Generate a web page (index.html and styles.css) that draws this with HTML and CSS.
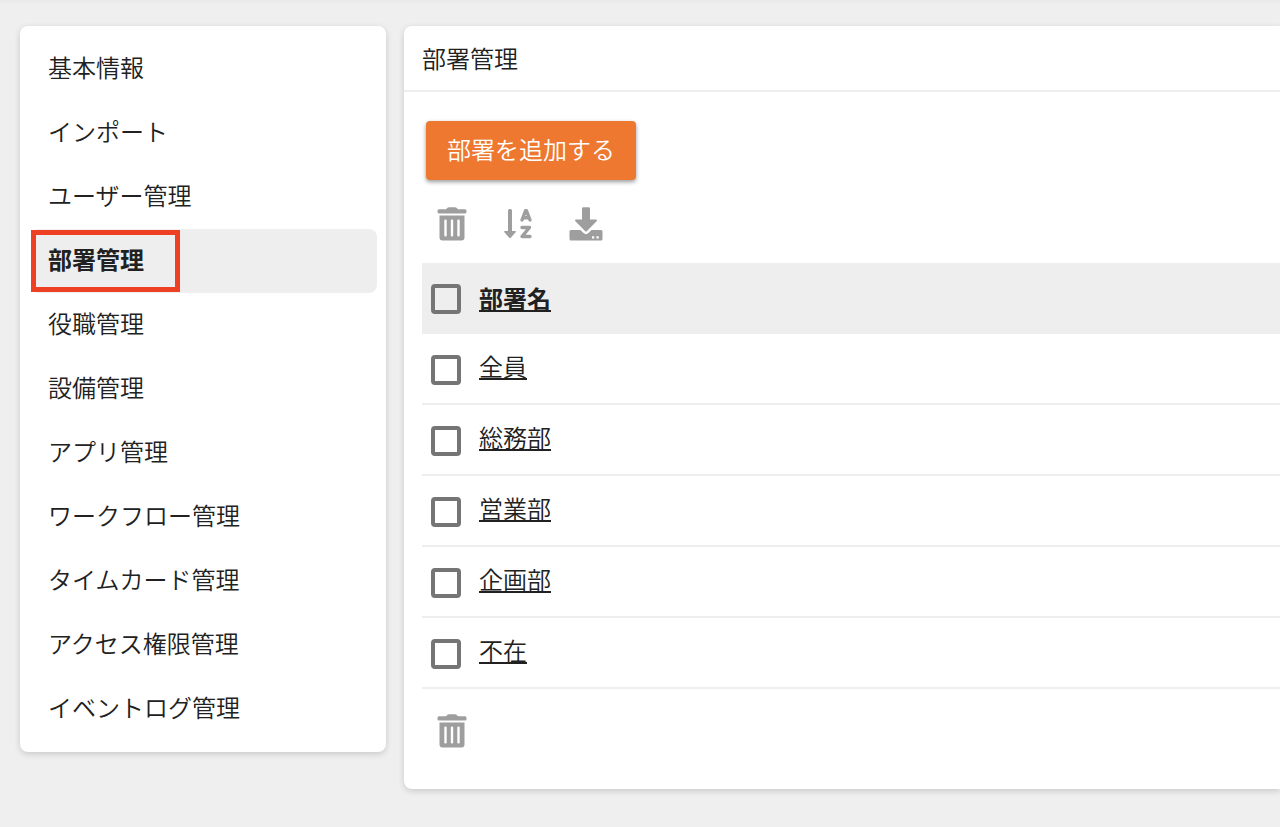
FILE: index.html
```html
<!DOCTYPE html>
<html lang="ja">
<head>
  <meta charset="UTF-8">
  <meta name="viewport" content="width=device-width, initial-scale=1.0">
  <title>部署管理</title>
  <link rel="stylesheet" href="styles.css">
</head>
<body>
  <!-- shared icon -->
  <svg class="icon-defs" aria-hidden="true">
    <symbol id="icon-trash" viewBox="0 0 30 34">
      <path fill-rule="evenodd" d="M1.500 2.300H9L10.500.800Q11 .300 12 .300H18Q19 .300 19.500.800L21 2.300H28Q29.500 2.300 29.500 3.800V5Q29.500 6.500 28 6.500H2Q.500 6.500.500 5V3.800Q.500 2.300 2 2.300ZM2.500 8.500H27.500V30.500Q27.500 33.500 24.500 33.500H5.500Q2.500 33.500 2.500 30.500ZM8.300 12.500Q7.300 12.500 7.300 13.500V28.500Q7.300 29.500 8.300 29.500H8.700Q9.700 29.500 9.700 28.500V13.500Q9.700 12.500 8.700 12.500ZM14.800 12.500Q13.800 12.500 13.800 13.500V28.500Q13.800 29.500 14.800 29.500H15.200Q16.200 29.500 16.200 28.500V13.500Q16.200 12.500 15.200 12.500ZM21.300 12.500Q20.300 12.500 20.300 13.500V28.500Q20.300 29.500 21.300 29.500H21.700Q22.700 29.500 22.700 28.500V13.500Q22.700 12.500 21.700 12.500Z"/>
    </symbol>
  </svg>

  <div class="container">
    <nav class="sidebar">
      <a href="#">基本情報</a>
      <a href="#">インポート</a>
      <a href="#">ユーザー管理</a>
      <a href="#" class="active">部署管理</a>
      <a href="#">役職管理</a>
      <a href="#">設備管理</a>
      <a href="#">アプリ管理</a>
      <a href="#">ワークフロー管理</a>
      <a href="#">タイムカード管理</a>
      <a href="#">アクセス権限管理</a>
      <a href="#">イベントログ管理</a>
    </nav>

    <main class="panel">
      <h1>部署管理</h1>
      <div class="panel-body">
        <button type="button" class="add-button">部署を追加する</button>

        <div class="toolbar">
          <button type="button" aria-label="削除"><svg width="30" height="34"><use href="#icon-trash"/></svg></button>
          <button type="button" aria-label="並べ替え">
            <svg width="30" height="34" viewBox="0 0 30 34">
              <path d="M5 3.500Q5 2 6.500 2H7.500Q9 2 9 3.500V24H12Q13.500 24.200 12.600 25.300L8 30.500Q7 31.500 6 30.500L1.400 25.300Q.500 24.200 2 24H5Z"/>
              <path fill="none" stroke="#9e9e9e" stroke-width="3.400" stroke-linejoin="round" stroke-linecap="round" d="M19 13L22.500 3.800H23.500L27 13M20.500 10.800H25.500M19 20.500H26.500L19 29.500H27"/>
            </svg>
          </button>
          <button type="button" aria-label="ダウンロード">
            <svg width="34" height="34" viewBox="0 0 34 34">
              <path d="M13 1.500Q13 .300 14.200.300H19.800Q21 .300 21 1.500V12.500H27Q28.800 12.700 27.600 14.200L18 24Q17 25 16 24L6.400 14.200Q5.200 12.700 7 12.500H13Z"/>
              <path fill-rule="evenodd" d="M2 23H11.500L14.500 26Q17 28.300 19.500 26L22.500 23H32Q33.500 23 33.500 24.500V32Q33.500 33.500 32 33.500H2Q.500 33.500.500 32V24.500Q.500 23 2 23ZM23 29.200V31.400H25.200V29.200ZM27.500 29.200V31.400H29.700V29.200Z"/>
            </svg>
          </button>
        </div>

        <table>
          <thead>
            <tr>
              <th class="check"><input type="checkbox" aria-label="すべて選択"></th>
              <th><a href="#">部署名</a></th>
            </tr>
          </thead>
          <tbody>
            <tr>
              <td class="check"><input type="checkbox" aria-label="全員"></td>
              <td><a href="#">全員</a></td>
            </tr>
            <tr>
              <td class="check"><input type="checkbox" aria-label="総務部"></td>
              <td><a href="#">総務部</a></td>
            </tr>
            <tr>
              <td class="check"><input type="checkbox" aria-label="営業部"></td>
              <td><a href="#">営業部</a></td>
            </tr>
            <tr>
              <td class="check"><input type="checkbox" aria-label="企画部"></td>
              <td><a href="#">企画部</a></td>
            </tr>
            <tr>
              <td class="check"><input type="checkbox" aria-label="不在"></td>
              <td><a href="#">不在</a></td>
            </tr>
          </tbody>
        </table>

        <div class="toolbar toolbar-bottom">
          <button type="button" aria-label="選択した部署を削除"><svg width="30" height="34"><use href="#icon-trash"/></svg></button>
        </div>
      </div>
    </main>
  </div>
</body>
</html>
```
FILE: styles.css
```css
*, *::after {
  margin: 0;
  padding: 0;
  box-sizing: border-box;
}
body {
  min-height: 100vh;
  font-family: "Noto Sans CJK JP", sans-serif;
  font-size: 24px;
  font-weight: 350;
  line-height: 32px;
  color: #212121;
  background-color: #efefef;
  box-shadow: inset 0 4px 4px -3px rgba(0, 0, 0, 0.04);
}
a {
  color: inherit;
}
.icon-defs {
  display: none;
}
.container {
  display: flex;
  align-items: flex-start;
  gap: 18px;
  padding: 26px 0 26px 20px;
}
.sidebar, .panel {
  background-color: #fff;
  box-shadow: 0 2px 6px rgba(0, 0, 0, 0.16);
}
.sidebar {
  flex: 0 0 366px;
  padding: 11px 9px 11px 11px;
  border-radius: 8px;
}
.sidebar a {
  display: block;
  padding: 14px 17px 18px;
  border-radius: 8px;
  text-decoration: none;
}
.sidebar .active {
  position: relative;
  font-weight: 700;
  background-color: #eee;
}
/* red frame round the current item */
.sidebar .active::after {
  content: "";
  position: absolute;
  top: 1px;
  left: 0;
  width: 149px;
  height: 62px;
  border: 5px solid #ee4023;
}
.panel {
  flex: 1;
  border-radius: 8px 0 0 8px;
}
h1 {
  padding: 16px 18px;
  font-size: 24px;
  font-weight: 350;
  border-bottom: 2px solid #eee;
}
.panel-body {
  padding: 29px 0 0 18px;
}
.add-button {
  display: block;
  height: 59px;
  margin-left: 4px;
  padding: 0 21px 4px;
  font: inherit;
  color: #fff;
  background-color: #ee7830;
  border: none;
  border-radius: 4px;
  box-shadow: 0 2px 4px rgba(0, 0, 0, 0.4);
}
.toolbar {
  display: flex;
  gap: 36px;
  padding: 26px 15px 21px;
}
.toolbar-bottom {
  padding: 24px 15px 40px;
}
.toolbar button {
  height: 36px;
  background: none;
  border: none;
}
.toolbar svg {
  display: block;
  margin: auto;
  fill: #9e9e9e;
}
table {
  width: 100%;
  border-collapse: collapse;
}
th, td {
  text-align: left;
  vertical-align: middle;
  border-bottom: 2px solid #eee;
}
th {
  height: 70px;
  font-weight: 700;
  background-color: #eee;
}
td {
  height: 71px;
  padding-bottom: 6px;
}
.check {
  width: 57px;
  padding: 2px 0 0 9px;
}
td a, th a {
  text-decoration-thickness: 2px;
  text-underline-offset: 2px;
}
input[type="checkbox"] {
  display: block;
  appearance: none;
  width: 30px;
  height: 30px;
  border: 4px solid #757575;
  border-radius: 4px;
}
input[type="checkbox"]:checked {
  background-color: #757575;
}
```
